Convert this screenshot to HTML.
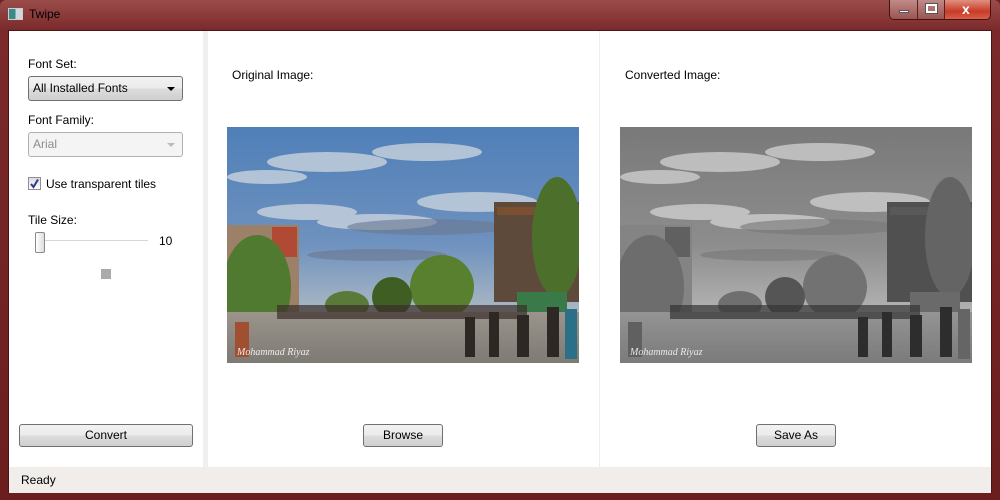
<!DOCTYPE html>
<html><head><meta charset="utf-8"><style>
*{margin:0;padding:0;box-sizing:border-box}
body{width:1000px;height:500px;overflow:hidden;background:#6e1f1f;font-family:"Liberation Sans",sans-serif;font-size:12px;color:#000;position:relative}
.frame{position:absolute;left:0;top:0;width:1000px;height:500px;background:linear-gradient(180deg,#9a4c4a 0,#7a2a2a 30px,#6b1e1e 100%);border-radius:6px 6px 0 0}
.title{position:absolute;left:29px;top:7px;color:#000;font-size:12px}
.ico{position:absolute;left:8px;top:8px;width:15px;height:12px;background:linear-gradient(90deg,#3a8a8a 0 50%,#cfd8dc 50%);border:1px solid #ccc}
.ctrl{position:absolute;left:889px;top:0;width:102px;height:20px;border:1px solid #4a1010;border-top:none;border-radius:0 0 5px 5px;overflow:hidden;display:flex}
.ctrl div{height:100%;background:linear-gradient(#c08a88,#9a5552);border-right:1px solid #5a2020;position:relative}
.ctrl .mn{width:28px}.ctrl .mx{width:27px}
.ctrl .cl{flex:1;background:linear-gradient(#e09080,#c83b26 60%,#d8604a);border:none}
.win{position:absolute;left:8px;top:30px;width:984px;height:463px;background:#fff;border:1px solid #4a1515}
.status{position:absolute;left:0;top:436px;width:982px;height:26px;background:#f0edeb}
.status span{position:absolute;left:12px;top:6px}
.sep{position:absolute;left:194px;top:0;width:5px;height:436px;background:#efefef}
.vline{position:absolute;left:590px;top:0;width:1px;height:436px;background:#eee}
.lbl{position:absolute}
.combo{position:absolute;left:19px;width:155px;height:25px;border:1px solid #707070;border-radius:3px;background:linear-gradient(#f2f2f2,#ebebeb 50%,#dddddd 51%,#cfcfcf);padding:4px 4px}
.combo.dis{background:#f4f4f4;border-color:#adb2b5;color:#8d8d8d}
.arrow{position:absolute;right:7px;top:10px;width:0;height:0;border-left:4px solid transparent;border-right:4px solid transparent;border-top:4px solid #000}
.dis .arrow{border-top-color:#bbb}
.btn{position:absolute;height:23px;border:1px solid #707070;border-radius:3px;background:linear-gradient(#f2f2f2,#ebebeb 50%,#dddddd 51%,#cfcfcf);text-align:center;line-height:21px}
.chk{position:absolute;left:19px;top:146px;width:13px;height:13px;border:1px solid #8f8f8f;background:linear-gradient(#ddd,#fff)}
.pic{position:absolute;top:96px;width:352px;height:236px;overflow:hidden}
</style></head><body>
<div class="frame"></div>
<div class="ico"></div>
<div class="title">Twipe</div>
<div class="ctrl"><div class="mn"><span style="position:absolute;left:9px;top:10px;width:10px;height:3px;background:#fff;border:1px solid #555"></span></div><div class="mx"><span style="position:absolute;left:8px;top:4px;width:11px;height:9px;border:2px solid #fff;outline:1px solid #555"></span></div><div class="cl"><span style="position:absolute;left:17px;top:1px;color:#fff;font-weight:bold;font-size:14px">x</span></div></div>
<div class="win">
 <div class="lbl" style="left:19px;top:26px">Font Set:</div>
 <div class="combo" style="top:45px">All Installed Fonts<div class="arrow"></div></div>
 <div class="lbl" style="left:19px;top:82px">Font Family:</div>
 <div class="combo dis" style="top:101px">Arial<div class="arrow"></div></div>
 <div class="chk"><svg width="11" height="11" style="position:absolute;left:0;top:0"><path d="M2 6 L4.5 9 L9 1.5" stroke="#2a3a8a" stroke-width="2" fill="none"/></svg></div>
 <div class="lbl" style="left:37px;top:146px">Use transparent tiles</div>
 <div class="lbl" style="left:19px;top:182px">Tile Size:</div>
 <div style="position:absolute;left:26px;top:209px;width:113px;height:2px;background:#d6d6d6;border-bottom:1px solid #fff"></div>
 <div style="position:absolute;left:26px;top:201px;width:10px;height:21px;border:1px solid #8a8a8a;border-radius:2px;background:linear-gradient(90deg,#fff,#ddd)"></div>
 <div class="lbl" style="left:150px;top:203px">10</div>
 <div style="position:absolute;left:92px;top:238px;width:10px;height:10px;background:#aaa"></div>
 <div class="btn" style="left:10px;top:393px;width:174px">Convert</div>
 <div class="sep"></div>
 <div class="vline"></div>
 <div class="lbl" style="left:223px;top:37px">Original Image:</div>
 <div class="lbl" style="left:616px;top:37px">Converted Image:</div>
 <div class="pic" style="left:218px" id="p1">
 <svg width="352" height="236" viewBox="0 0 352 236">
  <defs><linearGradient id="sk" x1="0" y1="0" x2="0" y2="1"><stop offset="0" stop-color="#4f7fb8"/><stop offset=".5" stop-color="#6f92bf"/><stop offset=".85" stop-color="#b8c0c4"/></linearGradient>
  <linearGradient id="gr" x1="0" y1="0" x2="0" y2="1"><stop offset="0" stop-color="#9a948c"/><stop offset="1" stop-color="#7e7a74"/></linearGradient></defs>
  <rect width="352" height="236" fill="url(#sk)"/>
  <g fill="#c9d3de" opacity=".8"><ellipse cx="100" cy="35" rx="60" ry="10"/><ellipse cx="200" cy="25" rx="55" ry="9"/><ellipse cx="250" cy="75" rx="60" ry="10"/><ellipse cx="80" cy="85" rx="50" ry="8"/><ellipse cx="150" cy="95" rx="60" ry="8"/><ellipse cx="40" cy="50" rx="40" ry="7"/></g>
  <g fill="#6a7890" opacity=".6"><ellipse cx="200" cy="100" rx="80" ry="8"/><ellipse cx="150" cy="128" rx="70" ry="6"/></g>
  <rect x="0" y="98" width="72" height="120" fill="#9c8068"/><rect x="45" y="100" width="25" height="30" fill="#b04a35"/>
  <ellipse cx="30" cy="160" rx="34" ry="52" fill="#4f7a30"/>
  <rect x="267" y="75" width="85" height="100" fill="#5e4a3a"/><rect x="270" y="80" width="80" height="8" fill="#7a5030"/>
  <ellipse cx="330" cy="110" rx="25" ry="60" fill="#4c6f2c"/>
  <ellipse cx="215" cy="160" rx="32" ry="32" fill="#58802e"/><ellipse cx="165" cy="170" rx="20" ry="20" fill="#3e5e24"/><ellipse cx="120" cy="178" rx="22" ry="14" fill="#5a7a3a"/>
  <rect x="290" y="165" width="50" height="20" fill="#3a7a48"/>
  <rect x="0" y="185" width="352" height="51" fill="url(#gr)"/>
  <rect x="50" y="178" width="250" height="14" fill="#3b2e2a" opacity=".7"/>
  <g fill="#2e2824"><rect x="238" y="190" width="10" height="40"/><rect x="262" y="185" width="10" height="45"/><rect x="290" y="188" width="12" height="42"/><rect x="320" y="180" width="12" height="50"/><rect x="338" y="182" width="12" height="50" fill="#2c7088"/><rect x="8" y="195" width="14" height="35" fill="#a05030"/></g>
  <text x="10" y="228" fill="#eee" font-size="10" font-style="italic" font-family="Liberation Serif,serif">Mohammad Riyaz</text>
 </svg></div>
 <div class="pic" style="left:611px;filter:grayscale(1) contrast(.95)" id="p2"></div>
 <div class="btn" style="left:354px;top:393px;width:80px">Browse</div>
 <div class="btn" style="left:747px;top:393px;width:80px">Save As</div>
 <div class="status"><span>Ready</span></div>
</div>
<script>document.getElementById('p2').innerHTML=document.getElementById('p1').innerHTML.replace(/id="sk"/,'id="sk2"').replace(/url\(#sk\)/,'url(#sk2)').replace(/id="gr"/,'id="gr2"').replace(/url\(#gr\)/,'url(#gr2)');</script>
</body></html>
